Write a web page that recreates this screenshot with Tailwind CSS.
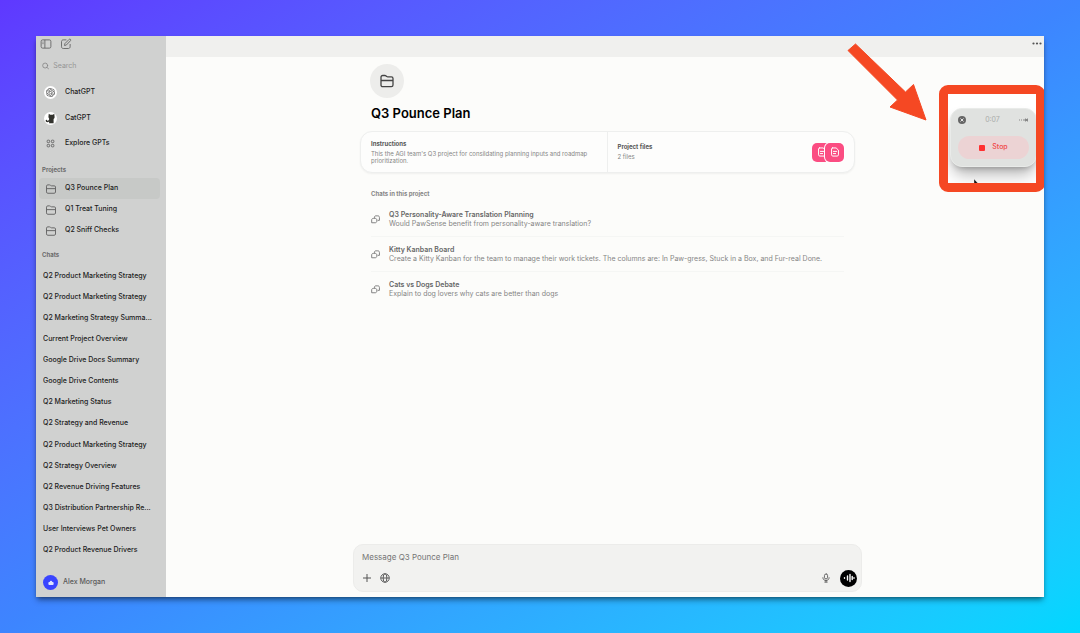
<!DOCTYPE html>
<html lang="en">
<head>
  <meta charset="UTF-8">
  <meta name="viewport" content="width=device-width, initial-scale=1.0">
  <title>Q3 Pounce Plan</title>
  <script src="https://cdn.jsdelivr.net/npm/@tailwindcss/browser@4"></script>
</head>
<body class="min-h-screen flex p-9 bg-linear-to-br from-[#5f38ff] via-[#3d85ff] to-[#00d8ff] font-['Inter','Liberation_Sans',sans-serif]">

  <!-- Shared icons -->
  <svg class="hidden">
    <symbol id="folder" viewBox="0 0 16 16">
      <path d="M2 11.800V4.200c0-1 .7-1.700 1.700-1.700h2.200c.5 0 .8.1 1.200.4l.6.5c.3.3.7.4 1.100.4h3.600c1 0 1.600.6 1.600 1.600v6.600c0 1-.7 1.700-1.700 1.700H3.700c-1 0-1.700-.7-1.700-1.700zM2 7.500h12" fill="none" stroke="currentColor" stroke-width="1.300" stroke-linejoin="round"/>
    </symbol>
    <symbol id="chats" viewBox="0 0 16 16">
      <path d="M6 4.500C6 2.500 7 1.500 8.500 1.500H12c2 0 3 1 3 3V9.500H12.500" fill="none" stroke="currentColor" stroke-width="1.600" stroke-linejoin="round" stroke-linecap="round"/>
      <path d="M4 6h3.500c1.600 0 2.800 1.200 2.800 2.800V11c0 1.600-1.200 2.800-2.800 2.800H1.200V8.800C1.200 7.200 2.400 6 4 6z" fill="none" stroke="currentColor" stroke-width="1.600" stroke-linejoin="round"/>
    </symbol>
    <symbol id="doc" viewBox="0 0 16 16">
      <path d="M4 1.500h5.800L13.500 5v7.500c0 1.200-.8 2-2 2h-7c-1.200 0-2-.8-2-2V3c0-.9.600-1.500 1.500-1.500zM5.500 7h5M5.500 10.500h3.500" fill="none" stroke="currentColor" stroke-width="1.600" stroke-linejoin="round" stroke-linecap="round"/>
    </symbol>
  </svg>

  <!-- App window -->
  <div class="relative flex flex-1 overflow-hidden bg-[#fcfcfa] shadow-md shadow-black/40">

    <!-- Sidebar -->
    <aside class="flex w-[130px] shrink-0 flex-col bg-[#d0d1d0] text-[7px] font-medium text-[#1c1c1c]">
      <div class="flex h-4 items-center gap-2 px-1 text-[#666]">
        <button aria-label="Toggle sidebar">
          <svg class="size-3" viewBox="0 0 16 16" fill="none" stroke="currentColor" stroke-width="1.2"><rect x="1.500" y="2.500" width="13" height="11" rx="2"/><path d="M6.500 2.500v11M3.300 5.500h1.400M3.300 7.500h1.400"/></svg>
        </button>
        <button aria-label="New chat">
          <svg class="size-3" viewBox="0 0 16 16" fill="none" stroke="currentColor" stroke-width="1.2" stroke-linejoin="round"><path d="M8.500 2.500H4.300C3 2.500 2 3.500 2 4.800v6.900C2 13 3 14 4.300 14h6.900c1.300 0 2.300-1 2.300-2.300V8"/><path d="M6 10l.5-2.500 5.700-5.700c.5-.5 1.300-.5 1.800 0s.5 1.300 0 1.800L8.400 9.400z"/></svg>
        </button>
      </div>
      <label class="mx-1 mt-1.5 flex h-4 items-center gap-1 px-0.5 text-[#858585]">
        <svg class="size-2" viewBox="0 0 16 16" fill="none" stroke="currentColor" stroke-width="1.800" stroke-linecap="round"><circle cx="7" cy="7" r="5.500"/><path d="M11 11l4 4"/></svg>
        <input type="text" aria-label="Search" placeholder="Search" class="w-full font-normal outline-none placeholder:text-[#959595]">
      </label>

      <nav class="mt-1.5 flex flex-col px-2">
        <a href="#" class="flex h-[25px] items-center gap-2">
          <span class="flex size-[13px] items-center justify-center rounded-full bg-white">
            <svg class="size-[9px]" viewBox="0 0 24 24" fill="#444"><path d="M22.280 9.820a5.980 5.980 0 0 0-.520-4.910 6.050 6.050 0 0 0-6.510-2.900A6.070 6.070 0 0 0 4.980 4.180a5.980 5.980 0 0 0-4 2.900 6.050 6.050 0 0 0 .740 7.100 5.980 5.980 0 0 0 .510 4.910 6.050 6.050 0 0 0 6.510 2.900A5.980 5.980 0 0 0 13.260 24a6.060 6.060 0 0 0 5.770-4.210 5.990 5.990 0 0 0 4-2.900 6.060 6.060 0 0 0-.750-7.070zm-9.020 12.610a4.480 4.480 0 0 1-2.880-1.040l4.920-2.840a.8.8 0 0 0 .390-.680v-6.740l2.020 1.170v5.620a4.500 4.500 0 0 1-4.450 4.510zM3.600 18.300a4.470 4.470 0 0 1-.530-3.010l4.920 2.840a.77.77 0 0 0 .780 0l5.840-3.370v2.330L9.740 19.950A4.500 4.500 0 0 1 3.600 18.300zM2.340 7.900a4.490 4.490 0 0 1 2.370-1.970v5.680a.77.77 0 0 0 .390.680l5.810 3.350-2.020 1.170-4.830-2.790A4.500 4.500 0 0 1 2.340 7.900zm16.600 3.860l-5.840-3.390 2.020-1.160 4.830 2.790a4.490 4.490 0 0 1-.680 8.100v-5.680a.79.79 0 0 0-.330-.660zm2-3.030l-4.910-2.860a.78.78 0 0 0-.790 0L9.410 9.230V6.900l4.860-2.790a4.500 4.500 0 0 1 6.670 4.620zM8.310 12.860l-2.020-1.160V6.070a4.500 4.500 0 0 1 7.380-3.450L8.840 5.460a.8.8 0 0 0-.390.680zm1.090-2.360l2.600-1.500 2.610 1.500v3l-2.600 1.500-2.610-1.500z"/></svg>
          </span>
          ChatGPT
        </a>
        <a href="#" class="flex h-[26px] items-center gap-2">
          <span class="flex size-[13px] items-center justify-center rounded-full bg-white">
            <svg class="size-[11px]" viewBox="0 0 16 16" fill="#33332e"><path d="M5.500 1l2.200 1.500h3.600L13.500 1l.5 5c-.1 1.200-.6 2-1.500 2.600V15H6v-2.500c-1.500 1.200-3.800 1.200-4.700-.3-.8-1.400 0-2.700 1.200-2.500.9.200.8 1.200.4 1.600 1 .5 2.400-.3 3.100-1.800V8C5.300 7.300 5 6.300 5 5z"/></svg>
          </span>
          CatGPT
        </a>
        <a href="#" class="flex h-[25px] items-center gap-2">
          <span class="flex size-[13px] items-center justify-center text-[#666]">
            <svg class="size-[9px]" viewBox="0 0 16 16" fill="none" stroke="currentColor" stroke-width="1.600"><rect x="2" y="2" width="4.500" height="4.500" rx="1.500"/><rect x="9.500" y="2" width="4.500" height="4.500" rx="1.500"/><rect x="2" y="9.500" width="4.500" height="4.500" rx="1.500"/><rect x="9.500" y="9.500" width="4.500" height="4.500" rx="1.500"/></svg>
          </span>
          Explore GPTs
        </a>
      </nav>

      <h2 class="mt-1.5 px-1.5 text-[6px] leading-4 font-bold text-[#6b6b6b]">Projects</h2>
      <nav class="flex flex-col pr-1.5 pl-[3px]">
        <a href="#" class="flex h-[21px] items-center gap-2 rounded-sm bg-[#c7c9c7] px-1.5"><svg class="size-3 text-[#666]"><use href="#folder"/></svg>Q3 Pounce Plan</a>
        <a href="#" class="flex h-[21px] items-center gap-2 rounded-sm px-1.5"><svg class="size-3 text-[#666]"><use href="#folder"/></svg>Q1 Treat Tuning</a>
        <a href="#" class="flex h-[21px] items-center gap-2 rounded-sm px-1.5"><svg class="size-3 text-[#666]"><use href="#folder"/></svg>Q2 Sniff Checks</a>
      </nav>

      <h2 class="mt-1.5 px-1.5 text-[6px] leading-4 font-bold text-[#6b6b6b]">Chats</h2>
      <nav class="flex flex-1 flex-col justify-between pt-0.5 pr-2 pl-[7px] leading-[21px]">
        <a href="#" class="truncate">Q2 Product Marketing Strategy</a>
        <a href="#" class="truncate">Q2 Product Marketing Strategy</a>
        <a href="#" class="truncate">Q2 Marketing Strategy Summa...</a>
        <a href="#" class="truncate">Current Project Overview</a>
        <a href="#" class="truncate">Google Drive Docs Summary</a>
        <a href="#" class="truncate">Google Drive Contents</a>
        <a href="#" class="truncate">Q2 Marketing Status</a>
        <a href="#" class="truncate">Q2 Strategy and Revenue</a>
        <a href="#" class="truncate">Q2 Product Marketing Strategy</a>
        <a href="#" class="truncate">Q2 Strategy Overview</a>
        <a href="#" class="truncate">Q2 Revenue Driving Features</a>
        <a href="#" class="truncate">Q3 Distribution Partnership Re...</a>
        <a href="#" class="truncate">User Interviews Pet Owners</a>
        <a href="#" class="truncate">Q2 Product Revenue Drivers</a>
      </nav>

      <button class="mt-2 flex h-[29px] items-center gap-[5px] px-[7px] text-[#5a5a5a]">
        <span class="flex size-[15px] items-center justify-center rounded-full bg-[#3a45ff]">
          <svg class="size-1.5" viewBox="0 0 16 16" fill="#dfe4ff"><path d="M1 7.500C1 6 2 5 3.500 5h1C5 3 6.300 2 8 2s3 1 3.500 3h1C14 5 15 6 15 7.500v3c0 1.500-1 2.500-2.500 2.500h-9C2 13 1 12 1 10.500z"/></svg>
        </span>
        Alex Morgan
      </button>
    </aside>

    <!-- Main area -->
    <div class="flex min-w-0 flex-1 flex-col">
      <header class="flex h-[21px] shrink-0 items-start justify-end bg-[#f0f0ee] px-0.5 pt-0.5">
        <button aria-label="More" class="text-[#555]">
          <svg class="h-3 w-2.5" viewBox="0 0 10 12" fill="currentColor"><circle cx="1.500" cy="5.500" r="1.100"/><circle cx="5" cy="5.500" r="1.100"/><circle cx="8.500" cy="5.500" r="1.100"/></svg>
        </button>
      </header>

      <main class="ml-[5px] flex flex-1 flex-col items-center">
        <div class="flex w-full max-w-[495px] flex-col pt-[7px]">
          <div class="ml-2.5 flex size-[34px] items-center justify-center rounded-full bg-[#ededeb] text-[#444]">
            <svg class="size-4"><use href="#folder"/></svg>
          </div>
          <h1 class="mt-[5px] ml-[11px] text-[13px] leading-5 font-semibold text-black">Q3 Pounce Plan</h1>

          <div class="mt-2 flex h-[42px] rounded-xl border border-[#eeefee] bg-[#fdfdfc] shadow-xs">
            <section class="flex w-1/2 flex-col justify-center border-r border-[#eeefee] px-2.5">
              <h2 class="text-[6px] leading-2 font-bold text-[#555]">Instructions</h2>
              <p class="mt-0.5 text-[6px] leading-[7px] text-[#858585]">This the AGI team's Q3 project for consildating planning inputs and roadmap prioritization.</p>
            </section>
            <section class="flex w-1/2 items-center justify-between px-2.5">
              <div>
                <h2 class="text-[6px] leading-2 font-bold text-[#555]">Project files</h2>
                <p class="mt-0.5 text-[6px] leading-2 text-[#858585]">2 files</p>
              </div>
              <div class="flex text-white">
                <span class="flex size-[19px] items-center justify-center rounded-[5px] bg-[#fb4d82]"><svg class="size-2.5"><use href="#doc"/></svg></span>
                <span class="-ml-[6px] flex size-[19px] items-center justify-center rounded-[5px] bg-[#fb4d82] ring-1 ring-white"><svg class="size-2.5"><use href="#doc"/></svg></span>
              </div>
            </section>
          </div>

          <h2 class="mt-[17px] ml-[11px] text-[6px] leading-2 font-bold text-[#858585]">Chats in this project</h2>
          <div class="mx-[11px] mt-1 flex flex-col divide-y divide-[#f5f6f4] text-[7px] leading-[9px] text-[#858585]">
            <a href="#" class="flex h-[35px] items-center gap-[9px]">
              <svg class="size-[9px] text-[#777]"><use href="#chats"/></svg>
              <span><strong class="block font-semibold text-[#666]">Q3 Personality-Aware Translation Planning</strong>Would PawSense benefit from personality-aware translation?</span>
            </a>
            <a href="#" class="flex h-[35px] items-center gap-[9px]">
              <svg class="size-[9px] text-[#777]"><use href="#chats"/></svg>
              <span><strong class="block font-semibold text-[#666]">Kitty Kanban Board</strong>Create a Kitty Kanban for the team to manage their work tickets. The columns are: In Paw-gress, Stuck in a Box, and Fur-real Done.</span>
            </a>
            <a href="#" class="flex h-[34px] items-center gap-[9px]">
              <svg class="size-[9px] text-[#777]"><use href="#chats"/></svg>
              <span><strong class="block font-semibold text-[#666]">Cats vs Dogs Debate</strong>Explain to dog lovers why cats are better than dogs</span>
            </a>
          </div>
        </div>

        <!-- Message box -->
        <form class="mt-auto mb-[5px] flex w-full max-w-[509px] flex-col rounded-[10px] border border-[#ececea] bg-[#f2f2f0] px-2 pt-1.5 pb-1">
          <input type="text" aria-label="Message" placeholder="Message Q3 Pounce Plan" class="h-3 w-full text-[8px] outline-none placeholder:text-[#757575]">
          <div class="mt-1.5 flex h-[18px] items-center text-[#555]">
            <button type="button" aria-label="Add"><svg class="size-2.5" viewBox="0 0 10 10" fill="none" stroke="currentColor"><path d="M5 1v8M1 5h8"/></svg></button>
            <button type="button" aria-label="Search the web" class="ml-2"><svg class="size-2.5" viewBox="0 0 16 16" fill="none" stroke="currentColor" stroke-width="1.500"><circle cx="8" cy="8" r="6.800"/><ellipse cx="8" cy="8" rx="3" ry="6.800"/><path d="M1.200 8h13.600"/></svg></button>
            <button type="button" aria-label="Dictate" class="ml-auto"><svg class="size-2.5" viewBox="0 0 16 16" fill="none" stroke="currentColor" stroke-width="1.400" stroke-linecap="round"><rect x="5.500" y="1.500" width="5" height="8" rx="2.500"/><path d="M3 7.500c0 2.800 2.200 4.500 5 4.500s5-1.700 5-4.500M8 12v2.500M6 14.500h4"/></svg></button>
            <button type="button" aria-label="Voice mode" class="-mr-1 ml-[9px] flex size-[17px] items-center justify-center rounded-full bg-black text-white"><svg class="size-3" viewBox="0 0 12 12" fill="none" stroke="currentColor" stroke-width="1.400" stroke-linecap="round"><path d="M1.500 5.800v.4M4.500 4v4M7 2.500v7M9.200 4.500v3M11 5.800v.4"/></svg></button>
          </div>
        </form>
      </main>
    </div>

    <!-- Arrow annotation -->
    <svg class="absolute top-0 right-[117px] h-[88px] w-[82px]" viewBox="0 0 82 88" fill="#f54823" stroke="#f54823" stroke-linejoin="round"><path d="M3 14.500L10.500 8 60.500 56 68.500 48.500 81 84 45 71 52.500 64z"/></svg>

    <!-- Highlighted recorder -->
    <div class="absolute top-[49px] -right-px h-[107px] w-[106px] overflow-hidden rounded-[9px] border-9 border-[#f54823] bg-white">
      <div class="mt-3.5 ml-0.5 flex h-[59px] w-[87px] flex-col rounded-xl border border-[#e9ebe9] bg-[#e0e2e0] px-[7px] pt-[5px] shadow-lg shadow-black/30">
        <div class="flex h-3 items-center justify-between text-[7px] text-[#aaacaa]">
          <button aria-label="Close"><svg class="size-2" viewBox="0 0 16 16"><circle cx="8" cy="8" r="8" fill="#666"/><path d="M5 5l6 6M11 5l-6 6" stroke="#e5e5e5" stroke-width="2"/></svg></button>
          <span>0:07</span>
          <svg class="h-2 w-2.5" viewBox="0 0 10 8" stroke="#888" fill="none"><path d="M0 4h1M2 4h1M4 4h1M6.500 2.500v3M8.500 2.500v3M5.500 3.500v1M7.500 3v2"/></svg>
        </div>
        <button class="mt-2.5 flex h-[23px] w-full items-center justify-center gap-[7px] rounded-full bg-[#ecd3d4] text-[7px] font-medium text-[#f04848]">
          <span class="size-1.5 rounded-[1px] bg-[#ff3030]"></span>Stop
        </button>
      </div>
      <svg class="absolute top-[84px] left-6 h-3 w-2" viewBox="0 0 8 12"><path d="M2 1v9l2-2 1.500 3 1.500-.700L5.500 7.500H8z" fill="#111" stroke="#eee" stroke-width=".4"/></svg>
    </div>
  </div>

</body>
</html>
